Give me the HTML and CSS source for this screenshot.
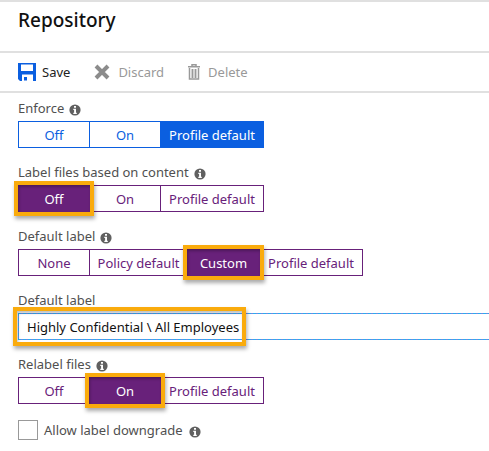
FILE: index.html
```html
<!DOCTYPE html>
<html lang="en">
<head>
<meta charset="utf-8">
<title>Repository</title>
<link rel="stylesheet" href="styles.css">
</head>
<body>
<svg class="defs" aria-hidden="true">
  <symbol id="info" viewBox="0 0 12 12">
    <circle cx="6" cy="6" r="5.6" fill="#606060"/>
    <path d="M5 2h2v1.8H5zM4.3 4.8H7v3.900h.8V10H4.300V8.700h.8V6h-.8z" fill="#fff"/>
  </symbol>
</svg>
<header class="header"><h1>Repository</h1></header>
<div class="toolbar" role="toolbar">
  <button class="tool save" type="button">
    <svg width="18" height="18" viewBox="0 0 18 18"><path fill="#0b5fe0" fill-rule="evenodd" d="M0 0h18v18h-3v-6.500H4V18H2l-2-2zM3 1.500v6.500h12V1.500zM6 14h3v3.500H6z"/></svg>
    <span>Save</span>
  </button>
  <button class="tool discard" type="button" disabled>
    <svg width="16" height="16" viewBox="0 0 16 16"><path d="M2 2l12 12M14 2L2 14" stroke="#8c8c8c" stroke-width="4"/></svg>
    <span>Discard</span>
  </button>
  <button class="tool delete" type="button" disabled>
    <svg width="12" height="16" viewBox="0 0 12 16"><path fill="none" stroke="#999" stroke-width="1.500" d="M0 2.800h12M4 2.500V.8h4v1.700M1.500 4v11h9V4M4.300 5v9M7.700 5v9"/><path d="M6 5v9" stroke="#aaa"/></svg>
    <span>Delete</span>
  </button>
</div>
<main class="settings">
  <section class="field">
    <div class="label" id="enforce">Enforce <svg class="info"><use href="#info"/></svg></div>
    <div class="options blue" role="group" aria-labelledby="enforce">
      <button type="button">Off</button><button type="button">On</button><button class="wide" type="button" aria-pressed="true">Profile default</button>
    </div>
  </section>
  <section class="field">
    <div class="label" id="content">Label files based on content <svg class="info"><use href="#info"/></svg></div>
    <div class="options" role="group" aria-labelledby="content">
      <button class="marked" type="button" aria-pressed="true">Off</button><button type="button">On</button><button class="wide" type="button">Profile default</button>
    </div>
  </section>
  <section class="field">
    <div class="label" id="default">Default label <svg class="info"><use href="#info"/></svg></div>
    <div class="options" role="group" aria-labelledby="default">
      <button type="button">None</button><button class="policy" type="button">Policy default</button><button class="custom marked" type="button" aria-pressed="true">Custom</button><button class="wide" type="button">Profile default</button>
    </div>
  </section>
  <section class="field">
    <label class="label" for="name">Default label</label>
    <div class="entry"><input id="name" type="text" value="Highly Confidential \ All Employees"></div>
  </section>
  <section class="field">
    <div class="label" id="relabel">Relabel files <svg class="info"><use href="#info"/></svg></div>
    <div class="options" role="group" aria-labelledby="relabel">
      <button type="button">Off</button><button class="marked" type="button" aria-pressed="true">On</button><button class="wide" type="button">Profile default</button>
    </div>
  </section>
  <label class="check"><input type="checkbox"><span>Allow label downgrade</span><svg class="info"><use href="#info"/></svg></label>
</main>
</body>
</html>
```
FILE: styles.css
```css
*, *::after { box-sizing: border-box; }
body {
  margin: 0;
  background: #fff;
  color: #505050;
  font: 13px/20px "Noto Sans", "Open Sans", sans-serif;
}
button, input { font: inherit; margin: 0; }
.defs { position: absolute; width: 0; height: 0; }
.header {
  padding: 6px 18px 19px;
  border-top: 2px solid #e0e0e0;
  border-bottom: 2px solid #e0e0e0;
}
h1 { margin: 0; color: #111; font-size: 19px; line-height: 24px; font-weight: 500; }
.toolbar {
  display: flex;
  padding: 9px 18px;
  gap: 24px;
  border-bottom: 2px solid #e0e0e0;
}
.tool {
  display: flex;
  align-items: center;
  gap: 8px;
  padding: 0;
  border: 0;
  background: none;
  color: #222;
}
.tool:disabled { color: #999; }
.tool.save { gap: 6px; }
.settings { padding: 5px 0 0 18px; }
.field { margin-bottom: 14px; }
.label { display: flex; align-items: center; gap: 5px; height: 20px; margin-bottom: 3px; }
.info { width: 12px; height: 12px; flex: none; margin-top: 3px; }
.options { --tone: #68217a; display: flex; height: 27px; }
.options.blue { --tone: #0b5fe0; }
.options button {
  position: relative;
  width: 72px;
  padding: 0;
  margin-right: -1px;
  border: 1px solid var(--tone);
  background: #fff;
  color: var(--tone);
  line-height: 20px;
  white-space: nowrap;
}
.options .wide { width: 104px; }
.options .policy { width: 99px; }
.options .custom { width: 73px; }
.options [aria-pressed="true"] { background: var(--tone); color: #fff; }
.options .marked { z-index: 1; }
.marked::after, .entry::after {
  content: "";
  position: absolute;
  inset: -5px;
  border: 4px solid #faab0c;
  box-shadow: 1px 3px 4px #0005, inset 1px 2px 3px #0004;
  pointer-events: none;
}
.entry { position: relative; }
.entry::after { inset: -6px auto -6px -5px; width: 233px; }
.entry input {
  --across: repeating-linear-gradient(90deg, #2aaef0 0 3px, #7584e0 3px 5px);
  --down: repeating-linear-gradient(#2aaef0 0 3px, #7584e0 3px 5px);
  display: block;
  width: 100%;
  height: 27px;
  padding: 0 9px;
  border: 0;
  outline: 0;
  background:
    var(--across) top / 100% 1px no-repeat,
    var(--across) bottom / 100% 1px no-repeat,
    var(--down) left / 1px 100% no-repeat,
    #fff;
  color: #111;
}
.check { display: flex; align-items: center; gap: 6px; width: fit-content; margin-top: 16px; }
.check input {
  appearance: none;
  width: 20px;
  height: 20px;
  border: 1px solid #999;
  background: #fff;
}
```
